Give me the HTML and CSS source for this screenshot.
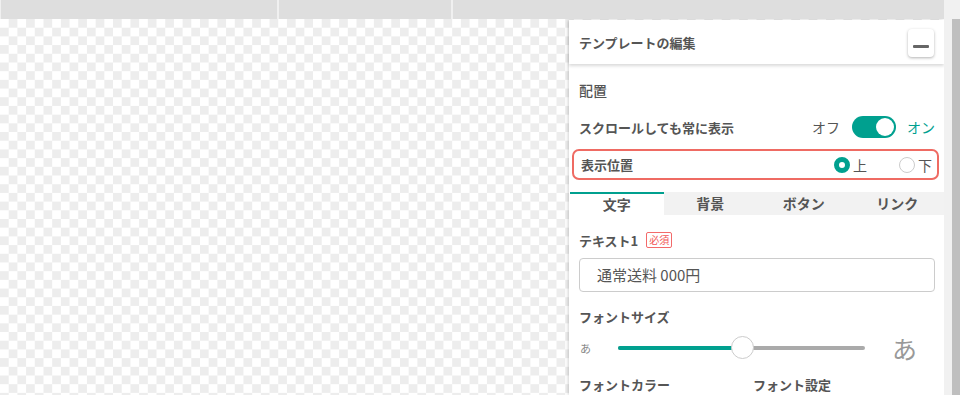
FILE: index.html
```html
<!DOCTYPE html>
<html lang="ja">

<head>
    <meta charset="UTF-8">
    <title>テンプレートの編集</title>
    <link rel="stylesheet" href="styles.css">
</head>

<body>
    <div class="screen">
        <div class="main">
            <div class="topbar">
                <div class="seg seg-a"></div>
                <div class="seg seg-b"></div>
                <div class="seg seg-c"></div>
            </div>
            <div class="stage">
                <div class="canvas"></div>
                <aside class="panel">
                    <div class="panel-head">
                        <span class="panel-title">テンプレートの編集</span>
                        <button class="btn-min"><span></span></button>
                    </div>

                    <div class="section-title">配置</div>

                    <div class="row row-scroll">
                        <span class="label">スクロールしても常に表示</span>
                        <div class="switch-wrap">
                            <span class="off">オフ</span>
                            <span class="switch"><span class="knob"></span></span>
                            <span class="on">オン</span>
                        </div>
                    </div>

                    <div class="row row-position">
                        <span class="label">表示位置</span>
                        <div class="radios">
                            <label class="radio"><span class="dot checked"></span>上</label>
                            <label class="radio"><span class="dot"></span>下</label>
                        </div>
                    </div>

                    <div class="tabs">
                        <div class="tab active">文字</div>
                        <div class="tab">背景</div>
                        <div class="tab">ボタン</div>
                        <div class="tab">リンク</div>
                    </div>

                    <div class="field-label">テキスト1 <span class="required">必須</span></div>
                    <div class="text-input">通常送料 000円</div>

                    <div class="field-label size-label">フォントサイズ</div>
                    <div class="slider-row">
                        <span class="a-small">あ</span>
                        <div class="slider">
                            <div class="fill" style="width: 50%"></div>
                            <div class="thumb-round" style="left: 50%"></div>
                        </div>
                        <span class="a-big">あ</span>
                    </div>

                    <div class="two-cols">
                        <div class="field-label">フォントカラー</div>
                        <div class="field-label">フォント設定</div>
                    </div>
                </aside>
            </div>
        </div>
        <div class="scrollbar">
            <div class="sb-thumb"></div>
        </div>
    </div>
</body>

</html>
```

FILE: styles.css
```css
html,
body {
    margin: 0;
    padding: 0;
    height: 395px;
    overflow: hidden;
    background: #fff;
    font-family: "Noto Sans CJK JP", "Noto Sans", sans-serif;
    color: #555;
}

.screen {
    display: flex;
    height: 395px;
}

.main {
    width: 944px;
    display: flex;
    flex-direction: column;
}

.topbar {
    height: 19px;
    display: flex;
    gap: 2px;
    padding-left: 1px;
    background: #f0f0f0;
}

.seg {
    background: #dedede;
}

.seg-a {
    width: 276px;
}

.seg-b {
    width: 172px;
}

.seg-c {
    flex: 1;
}

.stage {
    flex: 1;
    display: flex;
    overflow: hidden;
    background: repeating-conic-gradient(#ededed 0 25%, #fff 0 50%) 0 0 / 17.4px 17.4px;
}

.canvas {
    flex: 1;
}

.panel {
    width: 375px;
    margin-top: 1px;
    background: #fff;
    box-shadow: -1px 0 3px rgba(0, 0, 0, 0.18);
}

.panel-head {
    height: 44px;
    display: flex;
    align-items: center;
    justify-content: space-between;
    padding: 0 10px;
    box-shadow: 0 2px 3px rgba(0, 0, 0, 0.15);
}

.panel-title {
    font-size: 13px;
    font-weight: bold;
    color: #555;
}

.btn-min {
    width: 26px;
    height: 28px;
    margin-top: 2px;
    padding: 0;
    border: none;
    border-radius: 4px;
    background: #fff;
    box-shadow: 0 1px 3px rgba(0, 0, 0, 0.3);
    display: flex;
    align-items: flex-end;
    justify-content: center;
    padding-bottom: 9px;
    box-sizing: border-box;
}

.btn-min span {
    width: 16px;
    height: 3px;
    border-radius: 1px;
    background: #666;
}

.section-title {
    margin: 16px 0 0 10px;
    font-size: 14px;
    font-weight: 500;
    line-height: 20px;
    color: #555;
}

.row {
    display: flex;
    align-items: center;
    justify-content: space-between;
}

.label {
    font-size: 13px;
    font-weight: bold;
    color: #555;
}

.row-scroll {
    height: 22px;
    margin-top: 16px;
    padding: 0 9px 0 10px;
}

.switch-wrap {
    display: flex;
    align-items: center;
    font-size: 14px;
}

.off {
    color: #555;
}

.on {
    color: #00a08f;
}

.switch {
    width: 44px;
    height: 22px;
    margin: 0 11px 0 12px;
    border-radius: 11px;
    background: #00a08f;
    display: flex;
    align-items: center;
    justify-content: flex-end;
    padding-right: 2px;
    box-sizing: border-box;
}

.knob {
    width: 18px;
    height: 18px;
    border-radius: 50%;
    background: #fff;
}

.row-position {
    height: 31px;
    margin: 11px 5px 0 3px;
    padding: 0 5px 0 7px;
    border: 2px solid #ef6b63;
    border-radius: 7px;
    box-sizing: border-box;
}

.radios {
    display: flex;
    gap: 32px;
}

.radio {
    display: flex;
    align-items: center;
    gap: 3px;
    font-size: 14px;
    color: #555;
}

.dot {
    width: 16px;
    height: 16px;
    border-radius: 50%;
    border: 1px solid #ccc;
    box-sizing: border-box;
}

.dot.checked {
    border: 5px solid #00a08f;
    background: #fff;
}

.tabs {
    display: flex;
    height: 23px;
    margin-top: 12px;
    margin-left: 1px;
    background: #f2f2f2;
}

.tab {
    flex: 1;
    text-align: center;
    font-size: 14px;
    font-weight: bold;
    line-height: 23px;
    color: #555;
}

.tab.active {
    background: #fff;
    border-top: 2px solid #00a08f;
    line-height: 21px;
}

.field-label {
    display: flex;
    align-items: center;
    gap: 8px;
    height: 18px;
    margin: 16px 0 0 10px;
    font-size: 13px;
    font-weight: bold;
    color: #555;
}

.required {
    height: 16px;
    padding: 0 2px;
    border: 1px solid #f36a6a;
    border-radius: 2px;
    font-size: 10px;
    font-weight: normal;
    line-height: 14px;
    color: #f25656;
    box-sizing: border-box;
}

.text-input {
    height: 34px;
    margin: 9px 9px 0 10px;
    padding: 0 17px;
    border: 1px solid #ccc;
    border-radius: 4px;
    box-sizing: border-box;
    font-size: 15px;
    line-height: 32px;
    color: #555;
}

.size-label {
    margin-top: 15px;
}

.slider-row {
    display: flex;
    align-items: center;
    height: 26px;
    margin: 10px 0 0 11px;
}

.a-small {
    width: 38px;
    font-size: 11px;
    color: #888;
}

.slider {
    position: relative;
    width: 247px;
    height: 4px;
    border-radius: 2px;
    background: #aaa;
}

.fill {
    height: 4px;
    border-radius: 2px;
    background: #00a08f;
}

.thumb-round {
    position: absolute;
    top: -10px;
    width: 23px;
    height: 23px;
    margin-left: -11px;
    border-radius: 50%;
    border: 1px solid #ccc;
    background: #fff;
    box-sizing: border-box;
}

.a-big {
    margin-left: 27px;
    font-size: 25px;
    line-height: 26px;
    color: #999;
}

.two-cols {
    display: flex;
    margin-top: -2px;
}

.two-cols .field-label {
    width: 164px;
}

.scrollbar {
    width: 16px;
    display: flex;
    flex-direction: column;
    background: #f1f1f1;
    padding-left: 8px;
    box-sizing: border-box;
}

.sb-thumb {
    flex: 1;
    margin-top: 19px;
    background: #bfbfbf;
}
```
